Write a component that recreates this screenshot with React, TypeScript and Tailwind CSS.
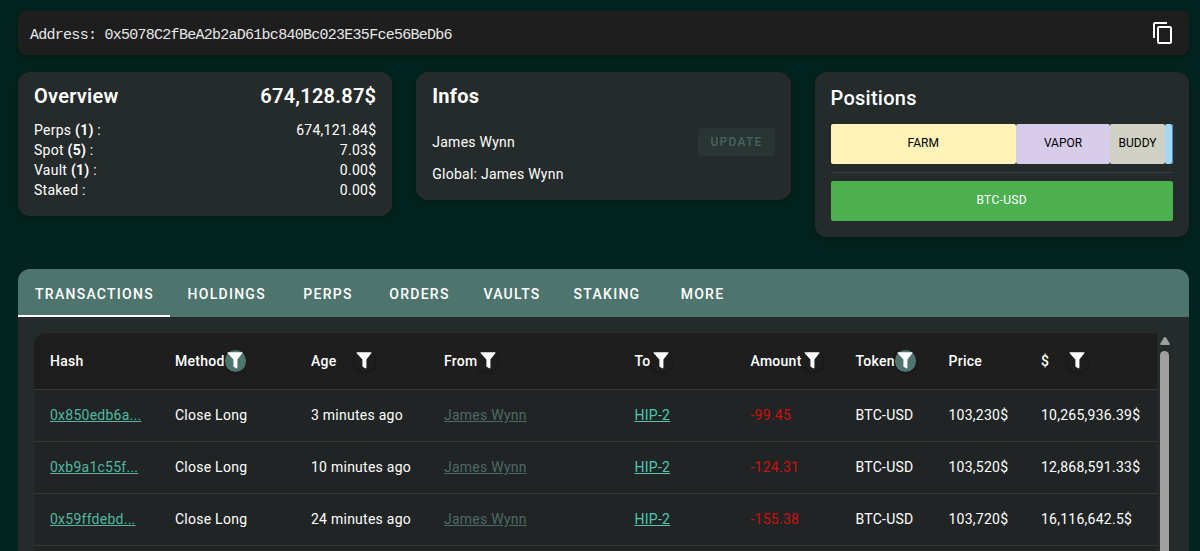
import { clsx } from 'clsx';

const OVERVIEW_ROWS = [
    { label: 'Perps', count: 1, value: '674,121.84$' },
    { label: 'Spot', count: 5, value: '7.03$' },
    { label: 'Vault', count: 1, value: '0.00$' },
    { label: 'Staked', count: null, value: '0.00$' },
];

const SPOT_POSITIONS = [
    { name: 'FARM', style: 'w-[185.5px] bg-[#fff3b8]' },
    { name: 'VAPOR', style: 'w-[94px] bg-[#d7cdeb]' },
    { name: 'BUDDY', style: 'w-[55px] bg-[#d0d0c4]' },
    { name: '', style: 'w-[6.5px] bg-[#a3d8f4]' },
    { name: '', style: 'w-px bg-[#3f8fd2]' },
];

const TABS = [
    { label: 'Transactions', width: 'w-[152px]' },
    { label: 'Holdings', width: 'w-[112.5px]' },
    { label: 'Perps', width: 'w-[90px]' },
    { label: 'Orders', width: 'w-[93px]' },
    { label: 'Vaults', width: 'w-[92px]' },
    { label: 'Staking', width: 'w-[98px]' },
    { label: 'More', width: 'w-[93px]' },
];

const COLUMNS = [
    { label: 'Hash', width: 'w-[125px]' },
    { label: 'Method', width: 'w-[136px]', filter: 'active', offset: 'ml-0' },
    { label: 'Age', width: 'w-[133px]', filter: 'idle', offset: 'ml-[17.5px]' },
    { label: 'From', width: 'w-[190.5px]', filter: 'idle', offset: 'ml-0' },
    { label: 'To', width: 'w-[116px]', filter: 'idle', offset: 'ml-0' },
    { label: 'Amount', width: 'w-[105px]', filter: 'idle', offset: 'ml-0' },
    { label: 'Token', width: 'w-[93px]', filter: 'active', offset: 'ml-0' },
    { label: 'Price', width: 'w-[92.5px]' },
    { label: '$', width: 'w-[132px]', filter: 'idle', offset: 'ml-[17.5px]' },
];

const TRANSACTIONS = [
    { hash: '0x850edb6a...', age: '3 minutes ago', amount: '-99.45', price: '103,230$', total: '10,265,936.39$' },
    { hash: '0xb9a1c55f...', age: '10 minutes ago', amount: '-124.31', price: '103,520$', total: '12,868,591.33$' },
    { hash: '0x59ffdebd...', age: '24 minutes ago', amount: '-155.38', price: '103,720$', total: '16,116,642.5$' },
];

const CARD = 'rounded-xl bg-[#252b2b] px-4 shadow-[0_2px_8px_rgba(0,0,0,0.3)]';

function FilterButton({ active, className }: { active: boolean; className?: string }) {
    return (
        <button
            className={clsx(
                'flex h-[22px] w-[21px] shrink-0 items-center justify-center rounded-full shadow-[0_1px_3px_rgba(0,0,0,0.35)]',
                active && 'bg-[#4d746e]',
                className,
            )}
        >
            <svg viewBox="0 0 16 17" className="h-[17px] w-4 fill-white">
                <path d="M1 .2h14q.7 0 .5.8L10.4 7.6v8q0 .9-.9.8L6.4 14.4V7.6L.5 1Q.3.2 1 .2Z" />
            </svg>
        </button>
    );
}

function AddressBar() {
    return (
        <div className="flex h-11 items-center justify-between rounded-lg bg-[#1d1e1d] pr-[14px] pl-3 shadow-[0_2px_6px_rgba(0,0,0,0.3)]">
            <span className="pt-1.5 font-['Liberation_Mono',monospace] text-[15px] tracking-[-0.73px] whitespace-pre text-[#e8e8e8]">
                Address: 0x5078C2fBeA2b2aD61bc840Bc023E35Fce56BeDb6
            </span>
            <svg viewBox="0 0 24 24" className="h-6 w-6 fill-white">
                <path d="M16 1H4c-1.1 0-2 .9-2 2v14h2V3h12V1zm3 4H8c-1.1 0-2 .9-2 2v14c0 1.1.9 2 2 2h11c1.1 0 2-.9 2-2V7c0-1.1-.9-2-2-2zm0 16H8V7h11v14z" />
            </svg>
        </div>
    );
}

function OverviewCard() {
    return (
        <section className={clsx(CARD, 'h-36 pt-2')}>
            <div className="flex h-8 items-center justify-between text-xl font-semibold tracking-[0.25px]">
                <h2>Overview</h2>
                <span>674,128.87$</span>
            </div>
            <dl className="mt-2 text-sm leading-5 tracking-[0.25px]">
                {OVERVIEW_ROWS.map((row) => (
                    <div key={row.label} className="flex justify-between">
                        <dt>
                            {row.label} {row.count !== null && <b>({row.count})</b>} :
                        </dt>
                        <dd>{row.value}</dd>
                    </div>
                ))}
            </dl>
        </section>
    );
}

function InfosCard() {
    return (
        <section className={clsx(CARD, 'h-32 pt-2')}>
            <h2 className="text-xl leading-8 font-bold tracking-[0.25px]">Infos</h2>
            <div className="mt-4 flex h-7 items-center justify-between">
                <span className="text-sm tracking-[0.25px]">James Wynn</span>
                <button className="h-7 rounded bg-[#2a3433] px-3 text-xs font-medium tracking-[1.25px] text-[#466660]">
                    UPDATE
                </button>
            </div>
            <p className="mt-2 text-sm tracking-[0.25px]">Global: James Wynn</p>
        </section>
    );
}

function PositionsCard() {
    return (
        <section className={clsx(CARD, 'h-[165px] pt-2.5')}>
            <h2 className="text-xl leading-8 font-medium tracking-[0.25px]">Positions</h2>
            <div className="mt-2.5 flex h-10 text-xs text-black">
                {SPOT_POSITIONS.map((p, i) => (
                    <div key={i} className={clsx('flex items-center justify-center rounded-xs pb-0.5', p.style)}>
                        {p.name}
                    </div>
                ))}
            </div>
            <hr className="my-2 border-[#34413f]" />
            <div className="flex h-10 items-center justify-center rounded-xs bg-[#4caf50] pb-0.5 text-xs tracking-[0.3px]">
                BTC-USD
            </div>
        </section>
    );
}

function TransactionsTable() {
    return (
        <table className="w-[1123px] table-fixed overflow-hidden rounded-tl-xl bg-[#212424] text-left text-sm tracking-[0.25px]">
            <thead>
                <tr className="h-14 border-b border-[#353a39] bg-[#1e1e1e]">
                    {COLUMNS.map((col) => (
                        <th key={col.label} className={clsx('pl-4 font-medium', col.width)}>
                            <div className="flex items-center">
                                {col.label}
                                {col.filter && <FilterButton active={col.filter === 'active'} className={col.offset} />}
                            </div>
                        </th>
                    ))}
                </tr>
            </thead>
            <tbody>
                {TRANSACTIONS.map((tx) => (
                    <tr key={tx.hash} className="h-[52px] border-b border-[#353a39] whitespace-nowrap">
                        <td className="pl-4">
                            <a href="#" className="text-[#50b8a2] underline">{tx.hash}</a>
                        </td>
                        <td className="pl-4">Close Long</td>
                        <td className="pl-4">{tx.age}</td>
                        <td className="pl-4">
                            <a href="#" className="text-[#4d6964] underline">James Wynn</a>
                        </td>
                        <td className="pl-4">
                            <a href="#" className="text-[#50c8b0] underline">HIP-2</a>
                        </td>
                        <td className="pl-4 text-[#d00e0e]">{tx.amount}</td>
                        <td className="pl-4">BTC-USD</td>
                        <td className="pl-4">{tx.price}</td>
                        <td className="pl-4">{tx.total}</td>
                    </tr>
                ))}
                <tr className="h-[52px]">
                    <td colSpan={9} />
                </tr>
            </tbody>
        </table>
    );
}

export default function App() {
    return (
        <div className="h-[551px] overflow-hidden bg-[#03241e] pt-[11px] pr-[11.2px] pl-[18px] font-[Roboto,sans-serif] text-white">
            <AddressBar />

            <div className="mt-[16.5px] grid h-[165px] grid-cols-3 items-start gap-6">
                <OverviewCard />
                <InfosCard />
                <PositionsCard />
            </div>

            {/* Activity panel */}
            <div className="mt-[32.5px] h-[400px] overflow-hidden rounded-t-xl bg-[#252b2b]">
                <nav className="flex h-12 bg-[#4e746e]">
                    {TABS.map((tab, i) => (
                        <button
                            key={tab.label}
                            className={clsx(
                                'border-b-2 pt-[3px] pl-px text-sm font-medium tracking-[1.27px] uppercase',
                                tab.width,
                                i === 0 ? 'border-white' : 'border-transparent',
                            )}
                        >
                            {tab.label}
                        </button>
                    ))}
                </nav>
                <div className="flex items-start px-4 pt-4">
                    <TransactionsTable />
                    {/* Scrollbar */}
                    <div className="flex w-[15px] flex-col items-center pt-1">
                        <svg viewBox="0 0 10 8" className="h-2 w-2.5 fill-[#9f9f9f]">
                            <path d="M5 0Q5.5 0 6 .6L9.7 6.5Q10 8 9 8H1Q0 8 .3 6.5L4 .6Q4.5 0 5 0Z" />
                        </svg>
                        <div className="mt-1.5 h-80 w-[9px] rounded-full bg-[#9f9f9f]" />
                    </div>
                </div>
            </div>
        </div>
    );
}
